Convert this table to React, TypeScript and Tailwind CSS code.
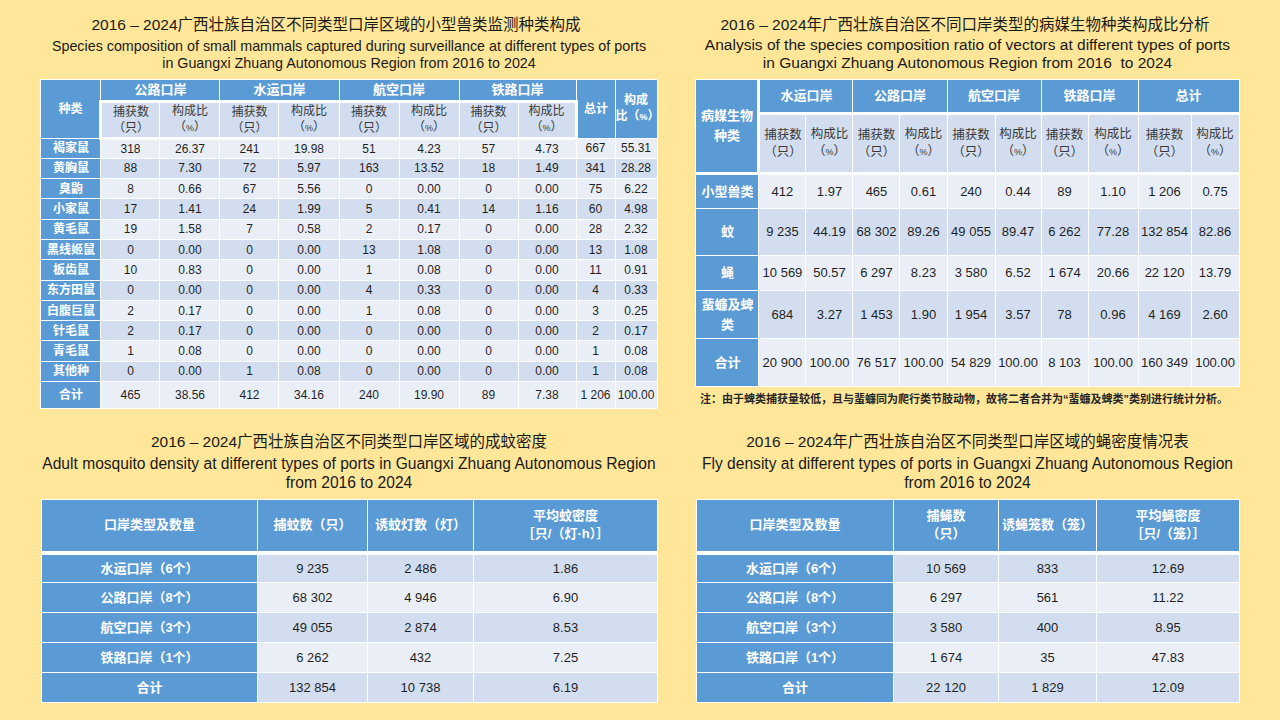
const ports = ['公路口岸', '水运口岸', '航空口岸', '铁路口岸'];

const mammals: string[][] = [
  ['褐家鼠', '318', '26.37', '241', '19.98', '51', '4.23', '57', '4.73', '667', '55.31'],
  ['黄胸鼠', '88', '7.30', '72', '5.97', '163', '13.52', '18', '1.49', '341', '28.28'],
  ['臭鼩', '8', '0.66', '67', '5.56', '0', '0.00', '0', '0.00', '75', '6.22'],
  ['小家鼠', '17', '1.41', '24', '1.99', '5', '0.41', '14', '1.16', '60', '4.98'],
  ['黄毛鼠', '19', '1.58', '7', '0.58', '2', '0.17', '0', '0.00', '28', '2.32'],
  ['黑线姬鼠', '0', '0.00', '0', '0.00', '13', '1.08', '0', '0.00', '13', '1.08'],
  ['板齿鼠', '10', '0.83', '0', '0.00', '1', '0.08', '0', '0.00', '11', '0.91'],
  ['东方田鼠', '0', '0.00', '0', '0.00', '4', '0.33', '0', '0.00', '4', '0.33'],
  ['白腹巨鼠', '2', '0.17', '0', '0.00', '1', '0.08', '0', '0.00', '3', '0.25'],
  ['针毛鼠', '2', '0.17', '0', '0.00', '0', '0.00', '0', '0.00', '2', '0.17'],
  ['青毛鼠', '1', '0.08', '0', '0.00', '0', '0.00', '0', '0.00', '1', '0.08'],
  ['其他种', '0', '0.00', '1', '0.08', '0', '0.00', '0', '0.00', '1', '0.08'],
];
const mammalTotal = ['合计', '465', '38.56', '412', '34.16', '240', '19.90', '89', '7.38', '1 206', '100.00'];

const vectors: { name: string; h: string; cells: string[] }[] = [
  { name: '小型兽类', h: 'h-[35px]', cells: ['412', '1.97', '465', '0.61', '240', '0.44', '89', '1.10', '1 206', '0.75'] },
  { name: '蚊', h: 'h-[47px]', cells: ['9 235', '44.19', '68 302', '89.26', '49 055', '89.47', '6 262', '77.28', '132 854', '82.86'] },
  { name: '蝇', h: 'h-[35px]', cells: ['10 569', '50.57', '6 297', '8.23', '3 580', '6.52', '1 674', '20.66', '22 120', '13.79'] },
  { name: '蜚蠊及蜱类', h: 'h-[48px]', cells: ['684', '3.27', '1 453', '1.90', '1 954', '3.57', '78', '0.96', '4 169', '2.60'] },
  { name: '合计', h: 'h-[48px]', cells: ['20 900', '100.00', '76 517', '100.00', '54 829', '100.00', '8 103', '100.00', '160 349', '100.00'] },
];

const mosquito = [
  ['水运口岸（6个）', '9 235', '2 486', '1.86'],
  ['公路口岸（8个）', '68 302', '4 946', '6.90'],
  ['航空口岸（3个）', '49 055', '2 874', '8.53'],
  ['铁路口岸（1个）', '6 262', '432', '7.25'],
  ['合计', '132 854', '10 738', '6.19'],
];

const fly = [
  ['水运口岸（6个）', '10 569', '833', '12.69'],
  ['公路口岸（8个）', '6 297', '561', '11.22'],
  ['航空口岸（3个）', '3 580', '400', '8.95'],
  ['铁路口岸（1个）', '1 674', '35', '47.83'],
  ['合计', '22 120', '1 829', '12.09'],
];

function MammalTable() {
  return (
    <table className="w-[616px] table-fixed border-collapse border border-white text-center">
      <colgroup>
        <col className="w-[60px]" />
        <col className="w-[59px]" />
        <col className="w-[60px]" />
        <col className="w-[59px]" />
        <col className="w-[60px]" />
        <col className="w-[60px]" />
        <col className="w-[60px]" />
        <col className="w-[59px]" />
        <col className="w-[58px]" />
        <col className="w-[39px]" />
        <col className="w-[42px]" />
      </colgroup>
      <thead>
        <tr className="h-[20px]">
          <th rowSpan={2} className="border border-white bg-[#5B9BD5] text-[12px] font-bold text-white">种类</th>
          {ports.map((p) => (
            <th key={p} colSpan={2} className="border border-white bg-[#5B9BD5] p-0 text-[13px] font-bold text-white">
              {p}
            </th>
          ))}
          <th rowSpan={2} className="border border-white bg-[#5B9BD5] p-0 text-[12px] font-bold text-white">总计</th>
          <th rowSpan={2} className="border border-white bg-[#5B9BD5] p-0 text-[12px] font-bold leading-[16px] text-white">
            构成
            <br />
            <span className="whitespace-nowrap">比（<span className="text-[9px]">%</span>）</span>
          </th>
        </tr>
        <tr className="h-[37px]">
          {ports.map((p, i) => [
            <th
              key={p + 'n'}
              className={`border border-y-[3px] border-white bg-[#D2DEEF] p-0 text-[12px] font-normal leading-[16px] text-[#3a3a3a] ${i === 0 ? 'border-l-[3px]' : ''}`}
            >
              捕获数
              <br />
              （只）
            </th>,
            <th
              key={p + 'r'}
              className={`border border-y-[3px] border-white bg-[#D2DEEF] p-0 text-[12px] font-normal leading-[16px] text-[#3a3a3a] ${i === 3 ? 'border-r-[3px]' : ''}`}
            >
              构成比
              <br />
              （<span className="text-[9px]">%</span>）
            </th>,
          ])}
        </tr>
      </thead>
      <tbody>
        {mammals.map((row, i) => (
          <tr key={row[0]} className="h-[20.3px]">
            <td className="border border-white bg-[#5B9BD5] p-0 text-[12px] font-bold text-white">{row[0]}</td>
            {row.slice(1).map((c, j) => (
              <td
                key={j}
                className={`border border-white p-0 text-[12px] text-[#1f1f1f] ${i % 2 === 0 ? 'bg-[#EAEFF7]' : 'bg-[#D2DEEF]'}`}
              >
                {c}
              </td>
            ))}
          </tr>
        ))}
        <tr className="h-[27px]">
          <td className="border border-white bg-[#5B9BD5] p-0 text-[12px] font-bold text-white">{mammalTotal[0]}</td>
          {mammalTotal.slice(1).map((c, j) => (
            <td key={j} className="whitespace-nowrap border border-white bg-[#EAEFF7] p-0 text-[12px] text-[#1f1f1f]">
              {c}
            </td>
          ))}
        </tr>
      </tbody>
    </table>
  );
}

function VectorTable() {
  return (
    <table className="w-[543px] table-fixed border-collapse border border-white text-center">
      <colgroup>
        <col className="w-[63px]" />
        <col className="w-[47px]" />
        <col className="w-[47px]" />
        <col className="w-[47px]" />
        <col className="w-[47px]" />
        <col className="w-[48px]" />
        <col className="w-[46px]" />
        <col className="w-[47px]" />
        <col className="w-[50px]" />
        <col className="w-[53px]" />
        <col className="w-[48px]" />
      </colgroup>
      <thead>
        <tr className="h-[34px]">
          <th rowSpan={2} className="border border-b-[3px] border-r-[3px] border-white bg-[#5B9BD5] px-1 text-[13px] font-bold leading-[20px] text-white">
            病媒生物种类
          </th>
          {['水运口岸', '公路口岸', '航空口岸', '铁路口岸', '总计'].map((p) => (
            <th key={p} colSpan={2} className="border border-white bg-[#5B9BD5] p-0 text-[13px] font-bold text-white">
              {p}
            </th>
          ))}
        </tr>
        <tr className="h-[60px]">
          {[0, 1, 2, 3, 4].map((i) => [
            <th key={i + 'n'} className="border border-y-[3px] border-white bg-[#D2DEEF] p-0 text-[12.5px] font-normal leading-[17px] text-[#3a3a3a]">
              捕获数
              <br />
              （只）
            </th>,
            <th key={i + 'r'} className="border border-y-[3px] border-white bg-[#D2DEEF] p-0 text-[12.5px] font-normal leading-[17px] text-[#3a3a3a]">
              构成比
              <br />
              （<span className="text-[9px]">%</span>）
            </th>,
          ])}
        </tr>
      </thead>
      <tbody>
        {vectors.map((v, i) => (
          <tr key={v.name} className={v.h}>
            <td className="border border-white bg-[#5B9BD5] px-0.5 text-[13px] font-bold leading-[20px] text-white">{v.name}</td>
            {v.cells.map((c, j) => (
              <td
                key={j}
                className={`whitespace-nowrap border border-white p-0 text-[13px] text-[#1f1f1f] ${i % 2 === 0 ? 'bg-[#EAEFF7]' : 'bg-[#D2DEEF]'}`}
              >
                {c}
              </td>
            ))}
          </tr>
        ))}
      </tbody>
    </table>
  );
}

function DensityTable({
  widths,
  heads,
  rows,
}: {
  widths: string[];
  heads: React.ReactNode[];
  rows: string[][];
}) {
  return (
    <table className="w-full table-fixed border-collapse border border-white text-center">
      <colgroup>
        {widths.map((w, i) => (
          <col key={i} className={w} />
        ))}
      </colgroup>
      <thead>
        <tr className="h-[53px]">
          {heads.map((h, i) => (
            <th key={i} className="border border-b-4 border-white bg-[#5B9BD5] p-0 text-[13px] font-bold leading-[18px] text-white">
              {h}
            </th>
          ))}
        </tr>
      </thead>
      <tbody>
        {rows.map((r, i) => (
          <tr key={r[0]} className="h-[30px]">
            <td className="border border-white bg-[#5B9BD5] p-0 text-[13px] font-bold text-white">{r[0]}</td>
            {r.slice(1).map((c, j) => (
              <td
                key={j}
                className={`border border-white p-0 text-[13px] text-[#1f1f1f] ${i % 2 === 0 ? 'bg-[#D2DEEF]' : 'bg-[#EAEFF7]'}`}
              >
                {c}
              </td>
            ))}
          </tr>
        ))}
      </tbody>
    </table>
  );
}

export default function App() {
  return (
    <div className="grid h-[720px] w-[1280px] grid-cols-[616px_543px] grid-rows-[420px_300px] gap-x-[39px] overflow-hidden bg-[#FFE699] px-[41px] font-['Liberation_Sans','Noto_Sans_CJK_SC',sans-serif] text-[#1a1a1a]">
      {/* Small mammal composition */}
      <section className="flex flex-col items-center pt-[15px]">
        <h2 className="mr-[26px] whitespace-nowrap text-[15.5px] font-normal leading-[20px]">2016 – 2024广西壮族自治区不同类型口岸区域的小型兽类监测种类构成</h2>
        <p className="mt-[3px] whitespace-nowrap text-center text-[14.3px] leading-[17px]">
          Species composition of small mammals captured during surveillance at different types of ports
          <br />
          in Guangxi Zhuang Autonomous Region from 2016 to 2024
        </p>
        <div className="mt-[7px]">
          <MammalTable />
        </div>
      </section>

      {/* Vector composition */}
      <section className="flex flex-col items-center pt-[15px]">
        <h2 className="mr-[5px] whitespace-nowrap text-[15.5px] font-normal leading-[20px]">2016 – 2024年广西壮族自治区不同口岸类型的病媒生物种类构成比分析</h2>
        <p className="mt-[1px] whitespace-nowrap text-center text-[15.5px] leading-[18px]">
          Analysis of the species composition ratio of vectors at different types of ports
          <br />
          in Guangxi Zhuang Autonomous Region from 2016&nbsp; to 2024
        </p>
        <div className="mt-[7px]">
          <VectorTable />
        </div>
        <p className="mt-[4px] self-start whitespace-nowrap pl-[4px] text-[11px] font-bold text-[#262626]">
          注：由于蜱类捕获量较低，且与蜚蠊同为爬行类节肢动物，故将二者合并为“蜚蠊及蜱类”类别进行统计分析。
        </p>
      </section>

      {/* Mosquito density */}
      <section className="flex flex-col items-center pt-[12px]">
        <h2 className="whitespace-nowrap text-[15.5px] font-normal leading-[20px]">2016 – 2024广西壮族自治区不同类型口岸区域的成蚊密度</h2>
        <p className="mt-[2px] whitespace-nowrap text-center text-[15.6px] leading-[19px]">
          Adult mosquito density at different types of ports in Guangxi Zhuang Autonomous Region
          <br />
          from 2016 to 2024
        </p>
        <div className="mt-[7px] w-full">
          <DensityTable
            widths={['w-[216px]', 'w-[110px]', 'w-[106px]', 'w-[184px]']}
            heads={[
              '口岸类型及数量',
              '捕蚊数（只）',
              '诱蚊灯数（灯）',
              <>
                平均蚊密度
                <br />
                ［只/（灯·h）］
              </>,
            ]}
            rows={mosquito}
          />
        </div>
      </section>

      {/* Fly density */}
      <section className="flex flex-col items-center pt-[12px]">
        <h2 className="whitespace-nowrap text-[15.5px] font-normal leading-[20px]">2016 – 2024年广西壮族自治区不同类型口岸区域的蝇密度情况表</h2>
        <p className="mt-[2px] whitespace-nowrap text-center text-[15.6px] leading-[19px]">
          Fly density at different types of ports in Guangxi Zhuang Autonomous Region
          <br />
          from 2016 to 2024
        </p>
        <div className="mt-[7px] w-full">
          <DensityTable
            widths={['w-[197px]', 'w-[105px]', 'w-[98px]', 'w-[143px]']}
            heads={[
              '口岸类型及数量',
              <>
                捕蝇数
                <br />
                （只）
              </>,
              '诱蝇笼数（笼）',
              <>
                平均蝇密度
                <br />
                ［只/（笼）］
              </>,
            ]}
            rows={fly}
          />
        </div>
      </section>
    </div>
  );
}
